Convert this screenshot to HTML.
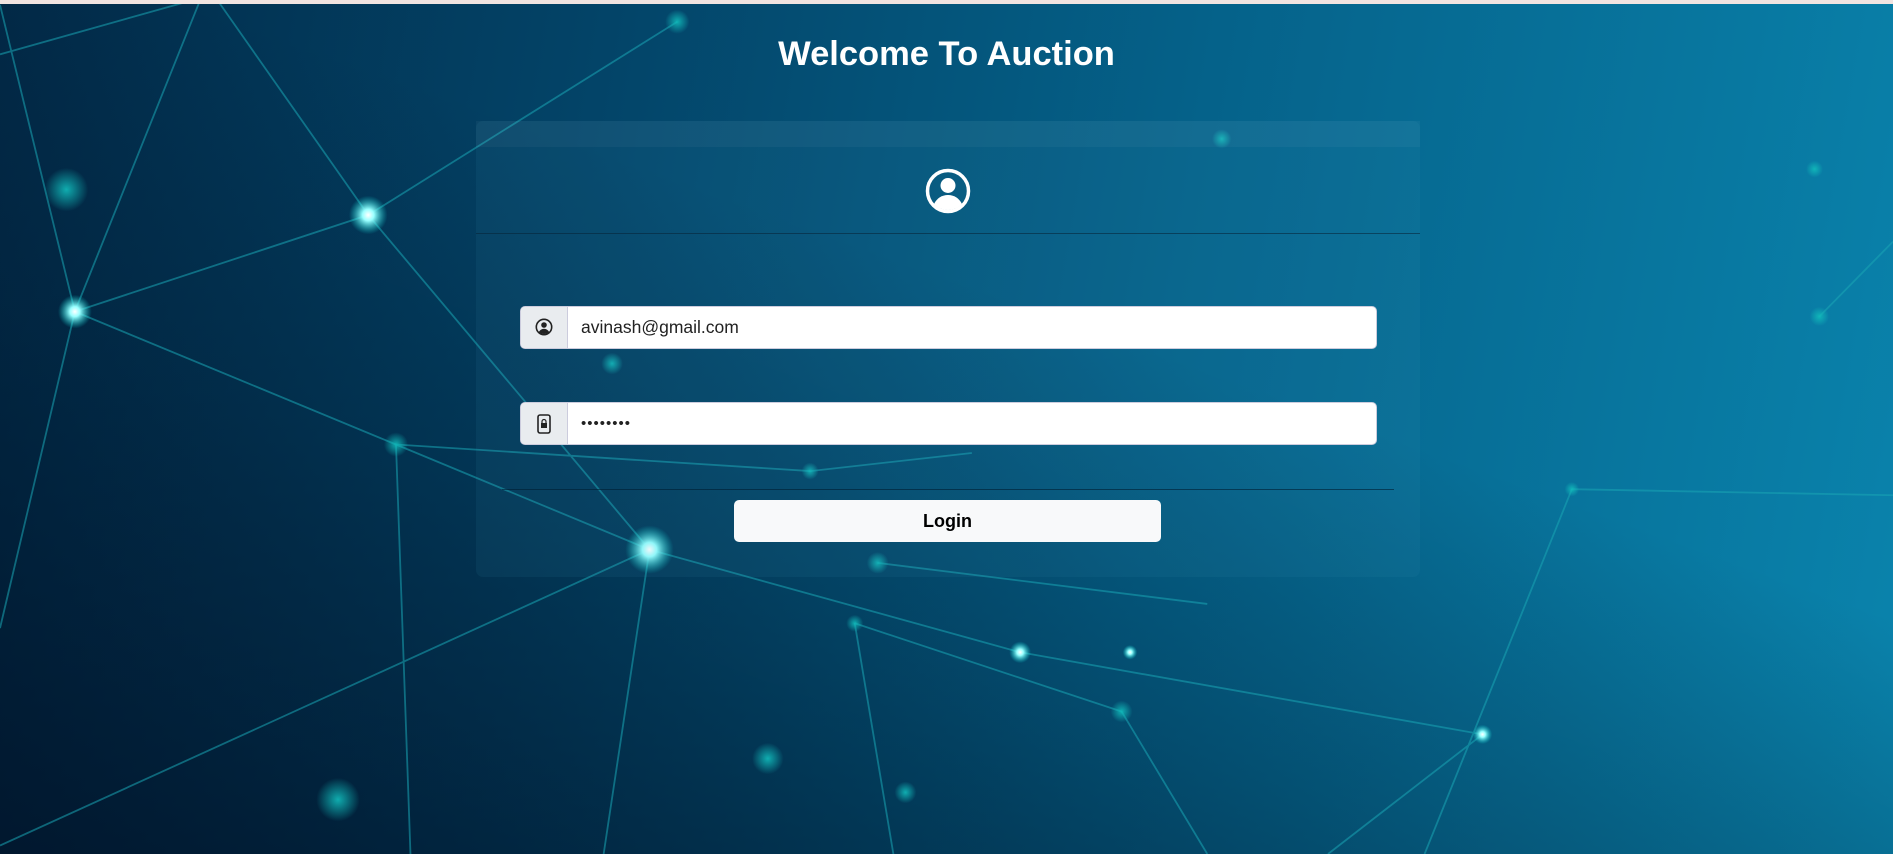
<!DOCTYPE html>
<html><head><meta charset="utf-8"><style>
html,body{margin:0;padding:0;width:1893px;height:854px;overflow:hidden;font-family:"Liberation Sans",sans-serif}
body{position:relative;background:linear-gradient(100deg,#022a48 0%,#034468 30%,#05628a 60%,#0a84ad 100%)}
.shade{position:absolute;inset:0;background:linear-gradient(20deg,rgba(0,15,35,.75) 0%,rgba(0,20,40,.3) 35%,rgba(0,0,0,0) 60%)}
svg.bg{position:absolute;left:0;top:0}
.top{position:absolute;left:0;top:0;width:1893px;height:4px;background:#f1e4e1}
h1{position:absolute;top:31px;left:0;width:1893px;text-align:center;margin:0;color:#fff;font-size:34.5px;font-weight:bold;line-height:46px}
.card{position:absolute;left:476px;top:121px;width:944px;height:456px;border-radius:7px;background:rgba(70,150,185,.09)}
.hdr{position:absolute;left:0;top:0;width:944px;height:112px;border-bottom:1px solid rgba(0,30,50,.55);background:linear-gradient(rgba(255,255,255,.035) 0,rgba(255,255,255,.035) 26px,rgba(255,255,255,0) 26px)}
.grp{position:absolute;left:44px;width:855px;height:41px;border:1px solid #ccd;border-radius:5px;background:#fff;overflow:hidden}
.add{position:absolute;left:0;top:0;width:46px;height:41px;background:#e9ecef;border-right:1px solid #ccd}
.val{position:absolute;left:60px;top:0;line-height:41px;font-size:17.5px;color:#222}
.div{position:absolute;left:26px;top:368px;width:892px;height:1px;background:rgba(0,30,50,.6)}
.btn{position:absolute;left:258px;top:379px;width:427px;height:42px;border-radius:5px;background:#f8f9fa;text-align:center;line-height:42px;font-weight:bold;font-size:18px;color:#000}
</style></head><body>
<div class="shade"></div>
<svg class="bg" width="1893" height="854" viewBox="0 0 1568 707" preserveAspectRatio="none">
<defs><radialGradient id="g"><stop offset="0" stop-color="#fff"/><stop offset=".3" stop-color="#9ff"/><stop offset="1" stop-color="#0cc" stop-opacity="0"/></radialGradient>
<radialGradient id="d"><stop offset="0" stop-color="#1bb" stop-opacity=".9"/><stop offset="1" stop-color="#1bb" stop-opacity="0"/></radialGradient></defs>
<g stroke="#1aa5b5" stroke-opacity=".55" stroke-width="1.5" fill="none">
<path d="M561 18L305 178L62 258M305 178L538 455M62 258L328 368L538 455L0 700M328 368L340 707M62 258L0 520M0 45L160 0M165 2L62 258M180 0L305 178M538 455L500 707M538 455L845 540M708 516L740 707M708 516L929 589M845 540L1228 608M1302 405L1568 410M1302 405L1180 707M1507 262L1568 200M0 4L62 258M328 368L671 390L805 375M929 589L1000 707M1228 608L1100 707M727 466L1000 500"/>
</g>
<g fill="url(#d)">
<circle cx="55" cy="157" r="18"/><circle cx="561" cy="18" r="10"/><circle cx="328" cy="368" r="10"/><circle cx="507" cy="301" r="9"/><circle cx="727" cy="466" r="9"/><circle cx="708" cy="516" r="7"/><circle cx="929" cy="589" r="9"/><circle cx="750" cy="656" r="9"/><circle cx="636" cy="628" r="13"/><circle cx="280" cy="662" r="18"/><circle cx="1302" cy="405" r="6"/><circle cx="1507" cy="262" r="8"/><circle cx="671" cy="390" r="7"/><circle cx="1503" cy="140" r="7"/><circle cx="1012" cy="115" r="8"/>
</g>
<g fill="url(#g)">
<circle cx="305" cy="178" r="16"/><circle cx="62" cy="258" r="14"/><circle cx="538" cy="455" r="20"/><circle cx="845" cy="540" r="9"/><circle cx="1228" cy="608" r="8"/><circle cx="936" cy="540" r="6"/>
</g>
</svg>
<div class="top"></div>
<h1>Welcome To Auction</h1>
<div class="card">
<div class="hdr"></div>
<svg style="position:absolute;left:449px;top:47px" width="46" height="46" viewBox="0 0 46 46"><circle cx="23" cy="23" r="20.5" fill="none" stroke="#fff" stroke-width="3.5"/><circle cx="23" cy="17.5" r="7.5" fill="#fff"/><path d="M9 36c3-6 8-9 14-9s11 3 14 9c-4 4-9 6-14 6s-10-2-14-6z" fill="#fff"/></svg>
<div class="grp" style="top:185px"><div class="add"><svg style="position:absolute;left:14px;top:11px" width="18" height="18" viewBox="0 0 18 18"><circle cx="9" cy="9" r="7.7" fill="none" stroke="#222" stroke-width="1.6"/><circle cx="9" cy="7" r="2.8" fill="#222"/><path d="M3.8 14c1.2-2.2 3-3.3 5.2-3.3s4 1.1 5.2 3.3c-1.4 1.3-3.2 2-5.2 2s-3.8-.7-5.2-2z" fill="#222"/></svg></div><div class="val">avinash@gmail.com</div></div>
<div class="grp" style="top:281px"><div class="add"><svg style="position:absolute;left:16px;top:11px" width="14" height="20" viewBox="0 0 14 20"><rect x="1" y="1" width="12" height="18" rx="2" fill="none" stroke="#222" stroke-width="1.6"/><rect x="4" y="9" width="6" height="5" fill="#222"/><path d="M5 9V7.5a2 2 0 0 1 4 0V9" fill="none" stroke="#222" stroke-width="1.2"/></svg></div><div class="val" style="letter-spacing:1px;font-size:15px">••••••••</div></div>
<div class="div"></div>
<div class="btn">Login</div>
</div>
</body></html>
